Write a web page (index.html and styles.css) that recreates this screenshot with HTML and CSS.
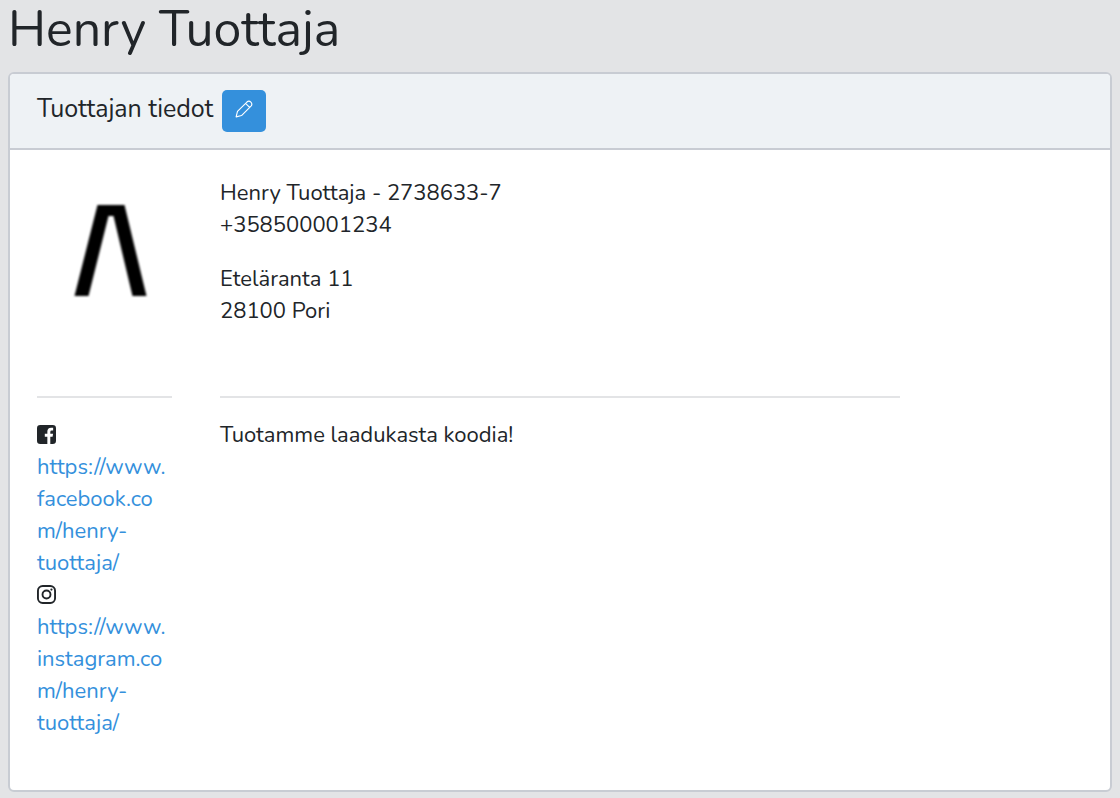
FILE: index.html
```html
<!DOCTYPE html>
<html lang="fi">
<head>
    <meta charset="UTF-8">
    <meta name="viewport" content="width=device-width, initial-scale=1">
    <title>Henry Tuottaja</title>
    <link rel="stylesheet" href="styles.css">
</head>
<body>
    <h1>Henry Tuottaja</h1>

    <div class="card">
        <div class="card-header">
            <h2>Tuottajan tiedot</h2>
            <button type="button" class="btn" aria-label="Muokkaa">
                <svg width="18" height="18" viewBox="0 0 16 16" fill="none" stroke="currentColor" stroke-linejoin="round">
                    <path d="M1 15 L2.2 10.2 L10.6 1.8 Q12.4 0.2 14.1 1.9 Q15.8 3.6 14.2 5.4 L5.8 13.8 Z M9.4 3 L13 6.6"/>
                </svg>
            </button>
        </div>

        <div class="card-body">
            <!-- Yhteystiedot -->
            <div class="row contact">
                <svg class="logo" viewBox="0 0 134 146" role="img" aria-label="Logo">
                    <path d="M60 28 H87 L109 119 H95 L76 39 H71 L51 119 H37 Z"/>
                </svg>
                <div>
                    <p>Henry Tuottaja - 2738633-7<br>+358500001234</p>
                    <p>Eteläranta 11<br>28100 Pori</p>
                </div>
            </div>

            <div class="row">
                <hr>
                <hr>
            </div>

            <!-- Some-linkit ja kuvaus -->
            <div class="row">
                <div class="social">
                    <div class="icon">
                        <svg width="19" height="19" viewBox="0 0 20 20">
                            <path fill="currentColor" fill-rule="evenodd" d="M3.500 0 H16.500 Q20 0 20 3.500 V16.500 Q20 20 16.500 20 H14 V12.300 H16.400 L16.900 9.300 H14 V7.300 Q14 5.800 15.500 5.800 H17 V3 Q16 2.800 14.800 2.800 Q10.900 2.800 10.900 6.800 V9.300 H8.200 V12.300 H10.900 V20 H3.500 Q0 20 0 16.500 V3.500 Q0 0 3.500 0 Z"/>
                        </svg>
                    </div>
                    <a href="https://www.facebook.com/henry-tuottaja/">https://www.<wbr>facebook.co<wbr>m/henry-<wbr>tuottaja/</a>
                    <div class="icon">
                        <svg width="19" height="19" viewBox="0 0 20 20" fill="none" stroke="currentColor" stroke-width="2">
                            <rect x="1" y="1" width="18" height="18" rx="5"/>
                            <circle cx="10" cy="10" r="4.200"/>
                            <circle cx="15.200" cy="4.800" r="1.200" fill="currentColor" stroke="none"/>
                        </svg>
                    </div>
                    <a href="https://www.instagram.com/henry-tuottaja/">https://www.<wbr>instagram.co<wbr>m/henry-<wbr>tuottaja/</a>
                </div>
                <p>Tuotamme laadukasta koodia!</p>
            </div>
        </div>
    </div>
</body>
</html>
```

FILE: styles.css
```css
* { box-sizing: border-box; margin: 0; padding: 0; }
body {
    padding: 0 8px 6px;
    font-family: Nunito, Lato, sans-serif;
    font-size: 22px;
    line-height: 32px;
    background-color: #e3e4e6;
    color: #212529;
}

h1 { font-size: 50px; font-weight: 400; line-height: 60px; margin-bottom: 12px; }
h2 { font-size: 25px; font-weight: 400; line-height: 38px; }
a { color: #3490dc; text-decoration: none; }
a:hover { text-decoration: underline; }
p { margin-bottom: 22px; }
hr { border: 0; border-top: 2px solid #e3e4e6; margin: 22px 0 21px; }

.card { background-color: #fff; border: 2px solid #c8ccd3; border-radius: 6px; overflow: hidden; }
.card-header { display: flex; gap: 9px; padding: 16px 27px; background-color: #eef2f5; border-bottom: 2px solid #c8ccd3; }
.card-body { padding: 27px 27px 29px; }

.btn { display: flex; justify-content: center; width: 44px; height: 42px; padding: 10px 0; background-color: #3490dc; color: #fff; border: none; border-radius: 5px; cursor: pointer; }
.btn:hover { background-color: #227dc7; }

.row { display: grid; grid-template-columns: 27fr 136fr 27fr; column-gap: 48px; }
.contact { min-height: 197px; }
.logo { width: 100%; height: 146px; filter: blur(1px); }

.social { padding-bottom: 22px; }
.social a { display: block; overflow-wrap: break-word; }
.icon { display: flex; align-items: center; height: 32px; padding-bottom: 2px; }
```
